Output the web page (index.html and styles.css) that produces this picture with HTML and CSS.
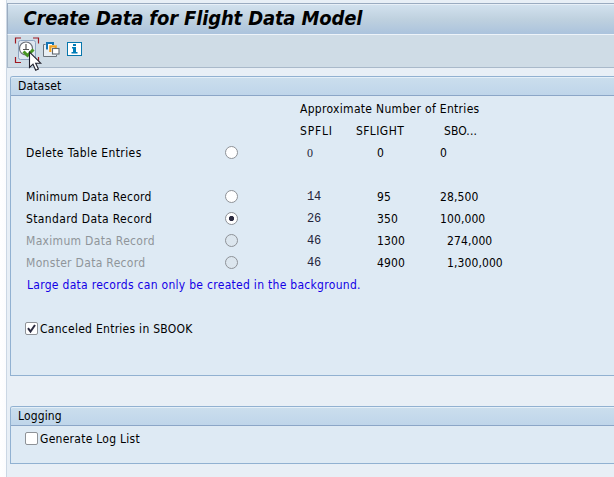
FILE: index.html
```html
<!DOCTYPE html>
<html lang="en">
<head>
<meta charset="utf-8">
<title>Create Data for Flight Data Model</title>
<link rel="stylesheet" href="styles.css">
</head>
<body>
<main class="window">
  <header class="titlebar"><h1>Create Data for Flight Data Model</h1></header>
  <nav class="toolbar">
    <svg class="tools" width="90" height="40" viewBox="0 0 90 40">
      <!-- execute button: focus corners, face, clock and tick -->
      <path d="M7.500 8.500V3h5.500M25 3h5.500v5.500M7.500 22V27.500H13M25 27.500h5.500v-5.500" fill="none" stroke="#a01820" stroke-width="1.200"/>
      <rect x="10.500" y="5.500" width="17" height="19" rx="2" fill="#dfe7f1" stroke="#8fa6c2"/>
      <circle cx="18" cy="13.500" r="6.500" fill="#fff" stroke="#6a6e76" stroke-width="1.200"/>
      <path d="M18 9v5M15 14.500h6" fill="none" stroke="#555" stroke-width="1.200"/>
      <path d="M15.500 16.500l4 4 6-6" fill="none" stroke="#479522" stroke-width="3"/>
      <!-- variants: stacked pages -->
      <path d="M37.500 9.500h-2v12H48.500V20" fill="#e9eff4" stroke="#6b737b"/>
      <rect x="38" y="7" width="7" height="7.500" fill="#fff"/>
      <path d="M39 14.500V8h6v2" fill="none" stroke="#1675b5" stroke-width="2"/>
      <rect x="41" y="10" width="7" height="7" fill="#fff"/>
      <path d="M42.300 17v-5.700h5.400V13.500" fill="none" stroke="#efa021" stroke-width="2.200"/>
      <rect x="44.500" y="13.500" width="6.500" height="5.500" fill="#fff" stroke="#626970" stroke-width="1.100"/>
      <!-- information -->
      <rect x="59.500" y="7.500" width="14" height="13" fill="#fff" stroke="#0877ad"/>
      <path d="M65 9h3v2h-3zM64 12h4v5h1.500v1.500h-6V17H65v-3.500h-1z" fill="#007db8"/>
      <!-- mouse pointer -->
      <path d="M21.500 17v15.500l3.500-3.300 2.700 6 2.700-1.300-2.700-5.700h5z" fill="#fff" stroke="#20202c" stroke-width="1.100"/>
    </svg>
  </nav>
  <section class="panel dataset">
    <h2>Dataset</h2>
    <div class="row"><span></span><span></span><span class="wide">Approximate Number of Entries</span></div>
    <div class="row"><span></span><span></span><span class="spfli">SPFLI</span><span class="sflight">SFLIGHT</span><span class="amount in4">SBO...</span></div>
    <div class="row"><span class="delete">Delete Table Entries</span><i class="radio"></i><code class="zero">0</code><span class="amount num">0</span><span class="amount">0</span></div>
    <div class="row"></div>
    <div class="row"><span>Minimum Data Record</span><i class="radio"></i><code>14</code><span class="amount num">95</span><span class="amount">28,500</span></div>
    <div class="row"><span class="standard">Standard Data Record</span><i class="radio on"></i><code>26</code><span class="amount num">350</span><span class="amount">100,000</span></div>
    <div class="row"><span class="off">Maximum Data Record</span><i class="radio dis"></i><code>46</code><span class="amount num">1300</span><span class="amount in7">274,000</span></div>
    <div class="row"><span class="off">Monster Data Record</span><i class="radio dis"></i><code>46</code><span class="amount num">4900</span><span class="amount in7">1,300,000</span></div>
    <div class="row"><span class="note">Large data records can only be created in the background.</span></div>
    <div class="row"></div>
    <div class="check"><i class="box"><svg width="11" height="11" viewBox="0 0 11 11"><path d="M2 5.200l2.500 3.300L9 2" fill="none" stroke="#2b2b40" stroke-width="2"/></svg></i><span>Canceled Entries in SBOOK</span></div>
  </section>
  <section class="panel logging">
    <h2>Logging</h2>
    <div class="check"><i class="box"></i><span>Generate Log List</span></div>
  </section>
</main>
</body>
</html>
```
FILE: styles.css
```css
* { box-sizing: border-box; }
body {
  margin: 0;
  height: 477px;
  overflow: hidden;
  background: linear-gradient(90deg, #fff 0, #fbfcfe 6px, #e8eff6 7px);
  font: 12px/22px "DejaVu Sans Condensed", "DejaVu Sans", sans-serif;
  font-stretch: condensed;
  letter-spacing: 0.31px;
  color: #000;
}
.window {
  margin-left: 6px;
  height: 477px;
  border-left: 1px solid #cbd7e4;
  background: #e8eff6;
  padding-top: 3px;
}
.titlebar {
  height: 32px;
  border: solid #9aabc0;
  border-width: 1px 0 0 1px;
  border-bottom: 1px solid #edf3f9;
  box-shadow: inset 0 1px #e7eff7;
  background: linear-gradient(#d3e2ef, #bfd1df 50%, #abc3dd);
}
h1 {
  margin: 0;
  padding-left: 15.5px;
  font: italic bold 20px/28px "DejaVu Sans Condensed", "DejaVu Sans", sans-serif;
  font-stretch: condensed;
  letter-spacing: -0.15px;
  white-space: nowrap;
}
.toolbar {
  height: 33px;
  border: solid #a9b9ca;
  border-width: 0 0 1px 1px;
  background: #cfdce6;
}
.tools { display: block; overflow: visible; }
.panel {
  margin-left: 3px;
  border: 1px solid #91b1d1;
  border-right: 0;
  border-top-left-radius: 3px;
  background: #deeaf4;
}
.dataset { margin-top: 8px; height: 300px; }
.logging { margin-top: 30px; height: 58px; }
h2 {
  margin: 0 0 1px;
  height: 19px;
  padding-left: 7px;
  border-bottom: 1px solid #8ba6c7;
  border-top-left-radius: 2px;
  box-shadow: inset 0 1px #e4eff8;
  background: linear-gradient(#cbdeed, #bfd5ea);
  font: inherit;
  line-height: 18px;
  letter-spacing: 0.15px;
}
.row {
  display: grid;
  grid-template-columns: 199px 75px 56px 84px 1fr;
  align-items: center;
  height: 22px;
  padding-left: 15px;
  white-space: nowrap;
}
.row span, .check span { padding-top: 2px; line-height: 20px; }
.row .wide { grid-column: 3 / 6; }
.row .num { padding-left: 21px; }
.row .in4 { padding-left: 4px; }
.row .in7 { padding-left: 7px; }
.row .off { color: #8f959a; }
.row .note { padding-left: 1px; color: #1400e6; letter-spacing: 0.29px; }
.spfli { letter-spacing: 0.8px; }
.sflight, .delete { letter-spacing: 0.4px; }
.standard { letter-spacing: 0.36px; }
.amount { letter-spacing: 0.1px; }
.check span { letter-spacing: 0.27px; }
code {
  padding: 2px 0 0 7px;
  font: 12px/20px "Liberation Mono", monospace;
  letter-spacing: -0.2px;
  color: #24243a;
}
.zero { font-family: "Liberation Serif", serif; }
.radio {
  width: 13px;
  height: 13px;
  border: 1.500px solid #8e9297;
  border-radius: 50%;
  background: #fff;
}
.radio.dis { background: #dce6ee; }
.radio.on { background: radial-gradient(circle, #2b2b40 2.200px, #fff 3px); }
.check {
  display: flex;
  align-items: center;
  height: 22px;
  padding-left: 14px;
  gap: 2px;
  white-space: nowrap;
}
.box {
  display: block;
  width: 13px;
  height: 13px;
  border: 1px solid #8e9297;
  border-radius: 2px;
  background: #fff;
}
.box svg { display: block; }
```
